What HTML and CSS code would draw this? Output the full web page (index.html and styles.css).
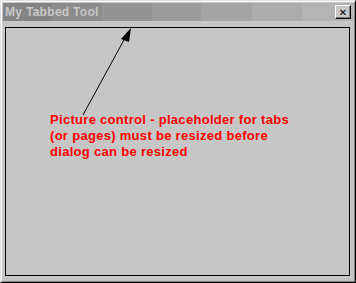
FILE: index.html
```html
<!DOCTYPE html>
<html lang="en">
<head>
    <meta charset="UTF-8">
    <title>My Tabbed Tool</title>
    <link rel="stylesheet" href="styles.css">
</head>
<body>
    <div class="window">
        <div class="titlebar">
            <span class="title">My Tabbed Tool</span>
            <button class="close" type="button">&#x2715;</button>
        </div>
        <div class="picture">
            <svg class="arrow" width="343" height="247" viewBox="0 0 343 247">
                <line x1="77" y1="87" x2="119" y2="10" stroke="#000" stroke-width="1"/>
                <polygon points="125,0 115,11 123,14" fill="#000"/>
            </svg>
            <p class="note">Picture control - placeholder for tabs<br>(or pages) must be resized before<br>dialog can be resized</p>
        </div>
    </div>
</body>
</html>
```

FILE: styles.css
```css
body {
    margin: 0;
    padding: 0;
    background-color: #c6c6c6;
    font-family: "Liberation Sans", Arial, sans-serif;
}
.window {
    box-sizing: border-box;
    width: 356px;
    height: 283px;
    padding: 2px;
    background-color: #c6c6c6;
    border: 1px solid;
    border-color: #dfdfdf #000 #000 #dfdfdf;
    box-shadow: inset 1px 1px 0 #fff, inset -1px -1px 0 #808080;
    display: flex;
    flex-direction: column;
}
.titlebar {
    height: 18px;
    display: flex;
    align-items: center;
    justify-content: space-between;
    padding: 0 2px 0 2px;
    background: linear-gradient(to right,
        #848484 0, #848484 49px,
        #8c8c8c 49px, #8c8c8c 99px,
        #949494 99px, #949494 149px,
        #9c9c9c 149px, #9c9c9c 198px,
        #a4a4a4 198px, #a4a4a4 249px,
        #acacac 249px, #acacac 299px,
        #b4b4b4 299px);
}
.title {
    color: #c8c8c8;
    font-weight: bold;
    font-size: 12px;
    letter-spacing: 0.3px;
}
.close {
    box-sizing: border-box;
    width: 16px;
    height: 14px;
    padding: 0;
    background-color: #c6c6c6;
    border: 1px solid;
    border-color: #fff #000 #000 #fff;
    box-shadow: inset -1px -1px 0 #808080;
    font-family: "DejaVu Sans", sans-serif;
    font-size: 10px;
    font-weight: bold;
    line-height: 11px;
    color: #000;
}
.picture {
    position: relative;
    box-sizing: border-box;
    margin: 6px 3px 4px 2px;
    flex: 1;
    border: 1px solid #000;
}
.arrow {
    position: absolute;
    top: 0;
    left: 0;
}
.note {
    margin: 0;
    padding: 84px 0 0 44px;
    color: #ff0000;
    font-weight: bold;
    font-size: 13px;
    line-height: 16px;
    letter-spacing: 0.3px;
}
```
